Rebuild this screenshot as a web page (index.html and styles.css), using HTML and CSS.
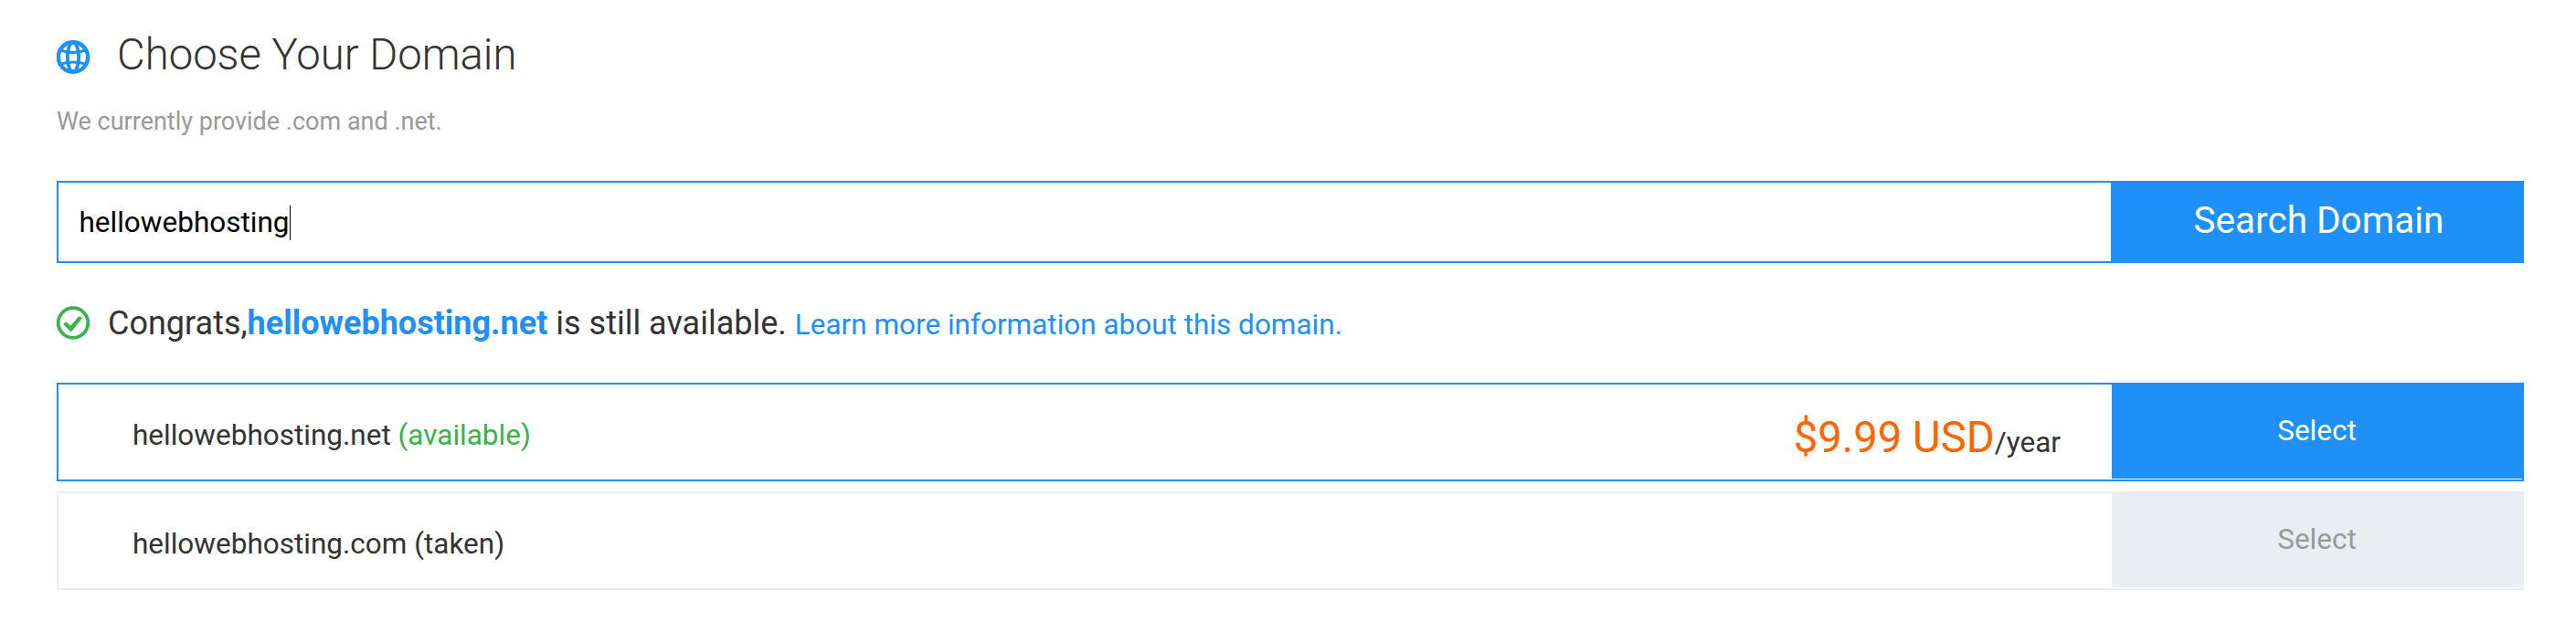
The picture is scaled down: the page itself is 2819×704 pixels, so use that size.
FILE: index.html
```html
<!DOCTYPE html>
<html lang="en">
<head>
  <meta charset="utf-8">
  <title>Choose Your Domain</title>

  <link rel="stylesheet" href="styles.css">
</head>
<body>

  <main class="domain-page">

    <header class="title">
      <svg class="icon" viewBox="0 0 37 37">
        <g fill="none" stroke="currentColor">
          <circle cx="18" cy="18.5" r="16.2" stroke-width="4.4" />
          <ellipse cx="18" cy="18.5" rx="6.2" ry="16" stroke-width="3.8" />
          <path d="M3.5 10.5Q18 16.8 32.5 10.5M3.5 26.5Q18 21.5 32.5 26.5" stroke-width="3.2" />
        </g>
      </svg>
      <h1>Choose Your Domain</h1>
    </header>

    <p class="hint">We currently provide .com and .net.</p>

    <div class="search">
      <div class="search-input"><span class="caret">hellowebhosting</span></div>
      <button class="search-button">Search Domain</button>
    </div>

    <div class="message">
      <svg class="icon" viewBox="0 0 37 37">
        <circle cx="18" cy="18.5" r="16.3" fill="none" stroke="currentColor" stroke-width="3.8" />
        <path d="M7.2 19.8L10.3 17.3L15.3 21.8L24.2 11.2L28 13.3L15.8 28.4Z" fill="currentColor" />
      </svg>
      <p>Congrats,<strong>hellowebhosting.net</strong> is still available. <a href="#">Learn more information about this domain.</a></p>
    </div>

    <ul class="results">
      <li class="result available">
        <div class="name">hellowebhosting.net <span class="status">(available)</span></div>
        <div class="price"><span class="amount">$9.99 USD</span>/year</div>
        <button class="select">Select</button>
      </li>
      <li class="result taken">
        <div class="name">hellowebhosting.com <span class="status">(taken)</span></div>
        <button class="select" disabled>Select</button>
      </li>
    </ul>

  </main>

</body>
</html>
```
FILE: styles.css
```css
* {
  box-sizing: border-box;
}

body {
  margin: 0;
  background: #fff;
  font-family: Roboto, sans-serif;
  font-size: 31.5px;
  line-height: 38px;
  color: #333;
}

h1, p, ul {
  margin: 0;
  padding: 0;
}

button {
  border: 0;
  font: inherit;
  color: #fff;
  background: #1e90f8;
}

.domain-page {
  padding: 32px 57px 0 62px;
}

.icon {
  flex: none;
  width: 37px;
  height: 37px;
}

.title {
  display: flex;
  align-items: center;
  height: 56px;
}

.title .icon {
  margin-top: 5px;
  color: #1e90f8;
}

.title h1 {
  margin-left: 29px;
  font-size: 47.25px;
  font-weight: 300;
  line-height: 56px;
}

.hint {
  margin-top: 29px;
  font-size: 27px;
  line-height: 32px;
  color: #999;
}

.search {
  display: flex;
  height: 90px;
  margin-top: 49px;
  border: 2px solid #1e90f8;
}

.search-input {
  flex: 1;
  display: flex;
  align-items: center;
  padding: 1px 0 0 22.5px;
  color: #000;
}

.caret {
  border-right: 1px solid #000;
}

.search-button {
  width: 450px;
  padding: 0 0 5px 5px;
  font-size: 40.5px;
}

.message {
  display: flex;
  align-items: center;
  height: 44px;
  margin-top: 43px;
  font-size: 36px;
}

.message .icon {
  color: #37b34a;
}

.message p {
  margin-left: 19px;
  padding-top: 3px;
  line-height: 44px;
}

.message strong {
  color: #1e90f8;
}

.message a {
  font-size: 31.5px;
  color: #1e90f8;
  text-decoration: none;
}

.results {
  margin-top: 44px;
  list-style: none;
}

.result {
  display: flex;
  align-items: center;
  height: 108px;
  border: 2px solid #eaeef3;
}

.result + .result {
  margin-top: 11px;
}

.result.available {
  border-color: #1e90f8;
}

.name {
  flex: 1;
  padding: 8px 0 0 81px;
}

.available .status {
  color: #37b34a;
}

.price {
  padding: 17px 56px 0 0;
  line-height: 56px;
}

.amount {
  font-size: 47.25px;
  color: #f60;
}

.select {
  align-self: flex-start;
  width: 449px;
  height: 103px;
  padding: 0 0 1px;
}

.select:disabled {
  color: #999;
  background: #eaeef3;
}
```
